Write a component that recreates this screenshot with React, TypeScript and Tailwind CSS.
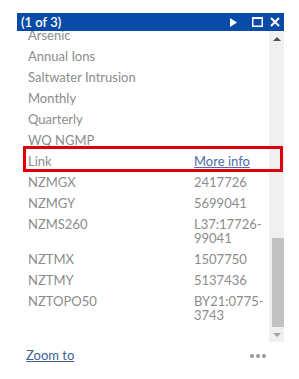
import React from "react";

const rows: [string, string][] = [
  ["Arsenic", ""],
  ["Annual Ions", ""],
  ["Saltwater Intrusion", ""],
  ["Monthly", ""],
  ["Quarterly", ""],
  ["WQ NGMP", ""],
  ["Link", "link"],
  ["NZMGX", "2417726"],
  ["NZMGY", "5699041"],
  ["NZMS260", "L37:17726-99041"],
  ["NZTMX", "1507750"],
  ["NZTMY", "5137436"],
  ["NZTOPO50", "BY21:0775-3743"],
];

export default function App() {
  return (
    <div
      className="relative w-[299px] h-[379px] bg-white overflow-hidden"
      style={{ fontFamily: "Lato, 'Open Sans', sans-serif" }}
    >
      <div className="ml-[17px] pt-[13px] w-[267px]">
        {/* title bar */}
        <div className="h-[18px] bg-[#0a4ba8] flex items-center pl-[4px] pr-[4px] text-white">
          <span className="text-[13px] font-semibold leading-none">(1 of 3)</span>
          <div className="ml-auto flex items-center">
            <svg width="7" height="9" viewBox="0 0 7 9" className="mr-[15px]">
              <path d="M0 0 L7 4.5 L0 9 Z" fill="white" />
            </svg>
            <svg width="11" height="10" viewBox="0 0 11 10" className="mr-[7px]">
              <rect x="0.75" y="1" width="9.5" height="8.25" fill="none" stroke="white" strokeWidth="1.5" />
              <rect x="0" y="0" width="11" height="2" fill="white" />
            </svg>
            <svg width="10" height="10" viewBox="0 0 10 10">
              <path d="M1 1 L9 9 M9 1 L1 9" stroke="white" strokeWidth="2" />
            </svg>
          </div>
        </div>

        {/* body */}
        <div className="flex h-[311px]">
          <div className="flex-1 overflow-hidden">
            <div className="mt-[-7px] pl-[11px] text-[13px] leading-[14px] text-[#8c8c8c]">
              {rows.map(([k, v]) => (
                <div key={k} className="grid grid-cols-[166px_72px] py-[3.5px]">
                  <span>{k}</span>
                  {v === "link" ? (
                    <a href="#" className="text-[#4a6ea8] underline">
                      More info
                    </a>
                  ) : (
                    <span className="break-words">{v}</span>
                  )}
                </div>
              ))}
            </div>
          </div>
          {/* scrollbar */}
          <div className="w-[15px] bg-[#f0f0f0] flex flex-col items-center">
            <div className="h-[17px] flex items-center justify-center">
              <div className="w-0 h-0 border-x-[4px] border-x-transparent border-b-[4px] border-b-[#505050]" />
            </div>
            <div className="flex-1 w-full flex flex-col pl-[3px]">
              <div className="h-[192px]" />
              <div className="h-[89px] bg-[#c1c1c1]" />
            </div>
            <div className="h-[17px] flex items-center justify-center">
              <div className="w-0 h-0 border-x-[4px] border-x-transparent border-t-[4px] border-t-[#a3a3a3]" />
            </div>
          </div>
        </div>

        {/* footer */}
        <div className="h-[28px] flex items-center pl-[9px] pr-[18px]">
          <a href="#" className="text-[13px] text-[#3d5f94] underline">
            Zoom to
          </a>
          <span className="ml-auto flex gap-[2px]">
            <span className="w-[4px] h-[4px] rounded-full bg-[#9a9a9a]" />
            <span className="w-[4px] h-[4px] rounded-full bg-[#9a9a9a]" />
            <span className="w-[4px] h-[4px] rounded-full bg-[#9a9a9a]" />
          </span>
        </div>
      </div>

      {/* highlight annotation */}
      <div className="absolute left-[23px] top-[146px] w-[260px] h-[26px] border-[3px] border-[#e0000b]" />
    </div>
  );
}
